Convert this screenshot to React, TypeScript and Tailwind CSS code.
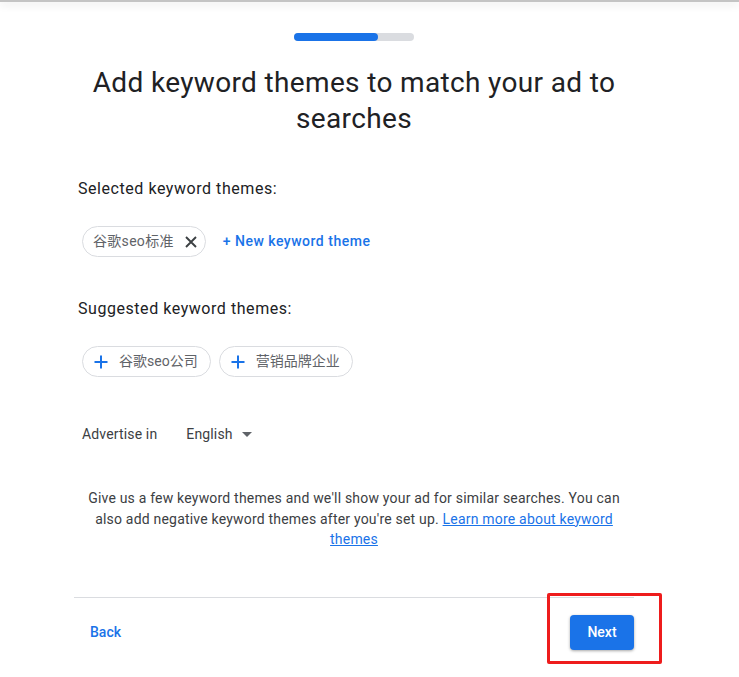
import React from "react";

const sans = { fontFamily: "Roboto, 'Noto Sans CJK SC', sans-serif" };

function XIcon() {
  return (
    <svg width="12" height="12" viewBox="0 0 12 12" className="block">
      <path d="M1 1 L11 11 M11 1 L1 11" stroke="#3c4043" strokeWidth="1.9" strokeLinecap="butt" />
    </svg>
  );
}

function PlusIcon() {
  return (
    <svg width="14" height="14" viewBox="0 0 14 14" className="block">
      <path d="M7 0.5 V13.5 M0.5 7 H13.5" stroke="#1a73e8" strokeWidth="2" />
    </svg>
  );
}

function SuggestChip({ label }: { label: string }) {
  return (
    <div className="flex h-[31px] items-center rounded-full border border-[#dadce0] pl-[11px] pr-[12px]">
      <PlusIcon />
      <span className="ml-[11px] text-[14px] text-[#5f6368]" style={sans}>
        {label}
      </span>
    </div>
  );
}

export default function App() {
  return (
    <div className="relative min-h-[677px] w-[739px] bg-white" style={sans}>
      <div className="h-[2px] w-full bg-[#c4c4c4] shadow-[0_2px_8px_rgba(0,0,0,0.18)]" />
      <div className="ml-[74px] flex w-[560px] flex-col">
        <div className="mt-[31px] flex justify-center">
          <div className="h-[8px] w-[120px] rounded-full bg-[#dadce0]">
            <div className="h-[8px] w-[84px] rounded-full bg-[#1a73e8]" />
          </div>
        </div>
        <h1 className="mt-[24px] text-center text-[28px] leading-[36px] tracking-[0.35px] text-[#202124]">
          Add keyword themes to match your ad to
          <br />
          searches
        </h1>
        <div className="mt-[40px] pl-[4px] text-[16px] leading-[24px] tracking-[0.55px] text-[#202124]">
          Selected keyword themes:
        </div>
        <div className="mt-[25px] flex items-center pl-[8px]">
          <div className="flex h-[31px] items-center rounded-full border border-[#dadce0] pl-[10px] pr-[8px]">
            <span className="text-[14px] tracking-[0.3px] text-[#5f6368]">谷歌seo标准</span>
            <span className="ml-[11px]">
              <XIcon />
            </span>
          </div>
          <span className="ml-[17px] text-[14px] font-medium tracking-[0.5px] text-[#1a73e8]">+ New keyword theme</span>
        </div>
        <div className="mt-[40px] pl-[4px] text-[16px] leading-[24px] tracking-[0.55px] text-[#202124]">
          Suggested keyword themes:
        </div>
        <div className="mt-[25px] flex items-center gap-[8px] pl-[8px]">
          <SuggestChip label="谷歌seo公司" />
          <SuggestChip label="营销品牌企业" />
        </div>
        <div className="mt-[47px] flex h-[20px] items-center pl-[8px] text-[14px] tracking-[0.15px] text-[#3c4043]">
          <span>Advertise in</span>
          <span className="ml-[29px]">English</span>
          <svg width="10" height="5" viewBox="0 0 10 5" className="ml-[9px] block">
            <path d="M0 0 L10 0 L5 5 Z" fill="#5f6368" />
          </svg>
        </div>
        <p className="mx-auto mt-[44px] w-[550px] text-center text-[14px] leading-[20.5px] tracking-[0.2px] text-[#3c4043]">
          Give us a few keyword themes and we'll show your ad for similar searches. You can also add negative keyword
          themes after you're set up.{" "}
          <span className="text-[#1a73e8] underline">Learn more about keyword themes</span>
        </p>
        <div className="mt-[47px] h-px w-full bg-[#dadce0]" />
        <div className="flex items-center justify-between pt-[17px]">
          <span className="pl-[16px] text-[14px] font-medium text-[#1a73e8]">Back</span>
          <button className="h-[35px] w-[64px] rounded-[4px] bg-[#1a73e8] text-[14px] font-medium text-white shadow-[0_1px_3px_rgba(0,0,0,0.35)]">
            Next
          </button>
        </div>
      </div>
      <div className="absolute left-[547px] top-[593px] h-[71px] w-[115px] rounded-[2px] border-[3px] border-[#ee1c1c]" />
    </div>
  );
}
